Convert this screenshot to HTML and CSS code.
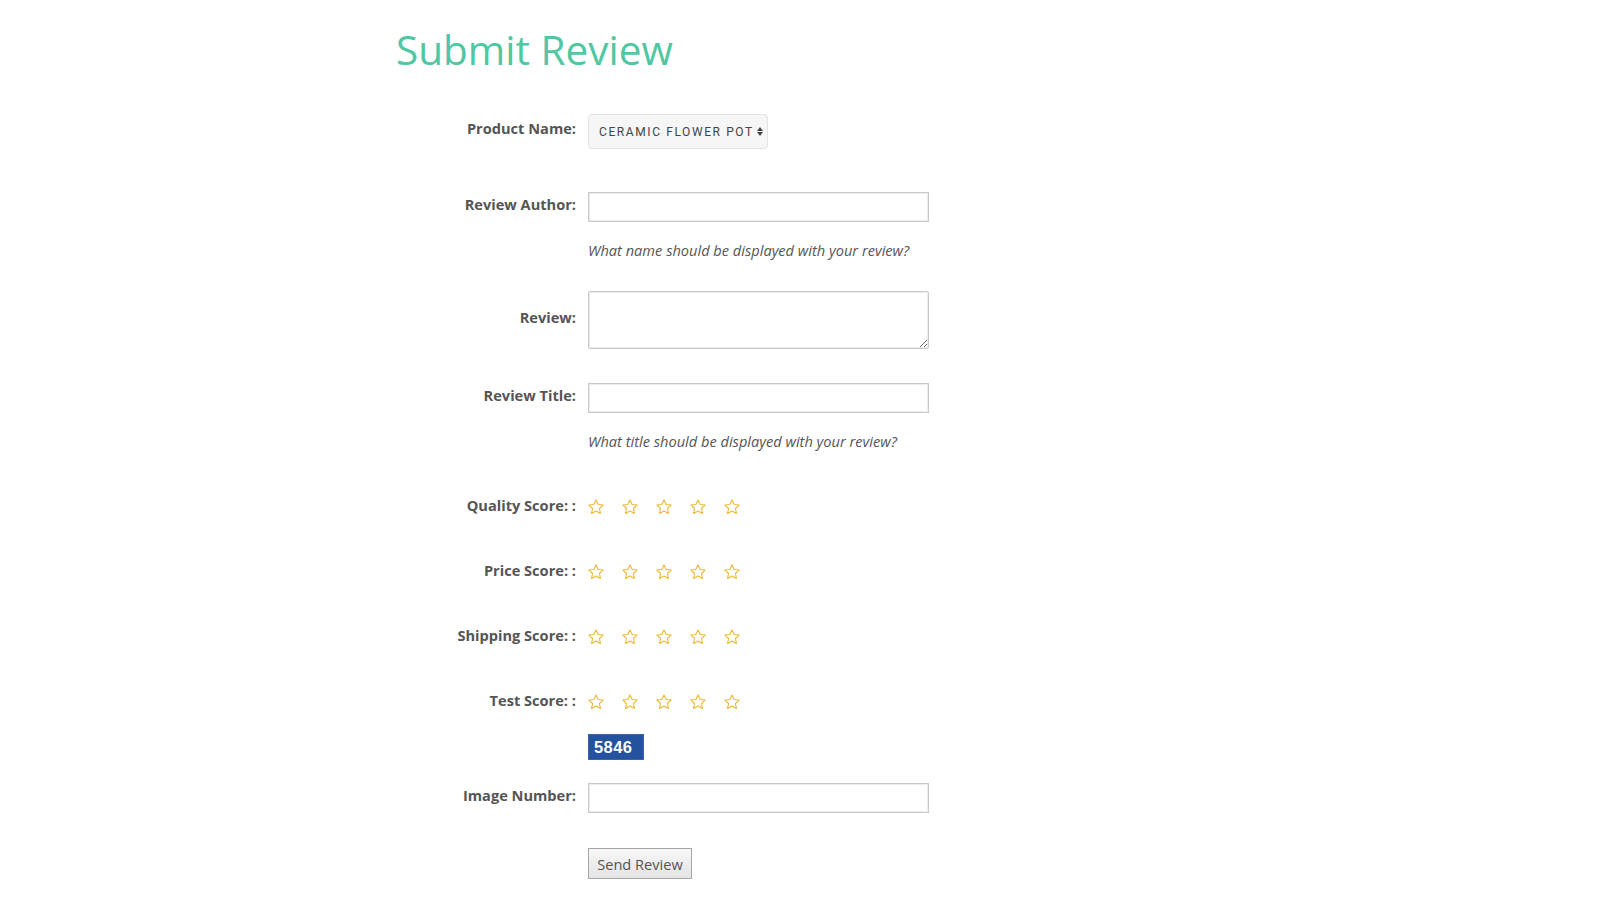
FILE: index.html
```html
<!DOCTYPE html>
<html lang="en">

<head>
    <meta charset="UTF-8">
    <meta name="viewport" content="width=device-width, initial-scale=1.0">
    <title>Submit Review</title>
    <link rel="stylesheet" href="styles.css">
</head>

<body>

    <div class="page">
        <h1 class="page-title">Submit Review</h1>

        <form class="review-form">
            <div class="row row-product">
                <label class="label" for="productName">Product Name:</label>
                <div class="select-wrap">
                    <select id="productName" class="select">
                        <option>Ceramic Flower Pot</option>
                    </select>
                    <span class="select-arrows"></span>
                </div>
            </div>

            <div class="row row-author">
                <label class="label" for="author">Review Author:</label>
                <input type="text" id="author" class="text-input">
            </div>
            <div class="row row-help">
                <span class="label"></span>
                <p class="help">What name should be displayed with your review?</p>
            </div>

            <div class="row row-review">
                <label class="label" for="review">Review:</label>
                <textarea id="review" class="text-area"></textarea>
            </div>

            <div class="row row-title">
                <label class="label" for="reviewTitle">Review Title:</label>
                <input type="text" id="reviewTitle" class="text-input">
            </div>
            <div class="row row-help">
                <span class="label"></span>
                <p class="help">What title should be displayed with your review?</p>
            </div>

            <div class="row row-score row-first-score">
                <span class="label">Quality Score: :</span>
                <div class="stars">
                    <svg class="star" viewBox="0 0 24 24"><path d="M12 2.5l2.9 6.1 6.6.8-4.9 4.6 1.3 6.6L12 17.3l-5.9 3.3 1.3-6.6-4.9-4.6 6.6-.8z"/></svg>
                    <svg class="star" viewBox="0 0 24 24"><path d="M12 2.5l2.9 6.1 6.6.8-4.9 4.6 1.3 6.6L12 17.3l-5.9 3.3 1.3-6.6-4.9-4.6 6.6-.8z"/></svg>
                    <svg class="star" viewBox="0 0 24 24"><path d="M12 2.5l2.9 6.1 6.6.8-4.9 4.6 1.3 6.6L12 17.3l-5.9 3.3 1.3-6.6-4.9-4.6 6.6-.8z"/></svg>
                    <svg class="star" viewBox="0 0 24 24"><path d="M12 2.5l2.9 6.1 6.6.8-4.9 4.6 1.3 6.6L12 17.3l-5.9 3.3 1.3-6.6-4.9-4.6 6.6-.8z"/></svg>
                    <svg class="star" viewBox="0 0 24 24"><path d="M12 2.5l2.9 6.1 6.6.8-4.9 4.6 1.3 6.6L12 17.3l-5.9 3.3 1.3-6.6-4.9-4.6 6.6-.8z"/></svg>
                </div>
            </div>

            <div class="row row-score">
                <span class="label">Price Score: :</span>
                <div class="stars">
                    <svg class="star" viewBox="0 0 24 24"><path d="M12 2.5l2.9 6.1 6.6.8-4.9 4.6 1.3 6.6L12 17.3l-5.9 3.3 1.3-6.6-4.9-4.6 6.6-.8z"/></svg>
                    <svg class="star" viewBox="0 0 24 24"><path d="M12 2.5l2.9 6.1 6.6.8-4.9 4.6 1.3 6.6L12 17.3l-5.9 3.3 1.3-6.6-4.9-4.6 6.6-.8z"/></svg>
                    <svg class="star" viewBox="0 0 24 24"><path d="M12 2.5l2.9 6.1 6.6.8-4.9 4.6 1.3 6.6L12 17.3l-5.9 3.3 1.3-6.6-4.9-4.6 6.6-.8z"/></svg>
                    <svg class="star" viewBox="0 0 24 24"><path d="M12 2.5l2.9 6.1 6.6.8-4.9 4.6 1.3 6.6L12 17.3l-5.9 3.3 1.3-6.6-4.9-4.6 6.6-.8z"/></svg>
                    <svg class="star" viewBox="0 0 24 24"><path d="M12 2.5l2.9 6.1 6.6.8-4.9 4.6 1.3 6.6L12 17.3l-5.9 3.3 1.3-6.6-4.9-4.6 6.6-.8z"/></svg>
                </div>
            </div>

            <div class="row row-score">
                <span class="label">Shipping Score: :</span>
                <div class="stars">
                    <svg class="star" viewBox="0 0 24 24"><path d="M12 2.5l2.9 6.1 6.6.8-4.9 4.6 1.3 6.6L12 17.3l-5.9 3.3 1.3-6.6-4.9-4.6 6.6-.8z"/></svg>
                    <svg class="star" viewBox="0 0 24 24"><path d="M12 2.5l2.9 6.1 6.6.8-4.9 4.6 1.3 6.6L12 17.3l-5.9 3.3 1.3-6.6-4.9-4.6 6.6-.8z"/></svg>
                    <svg class="star" viewBox="0 0 24 24"><path d="M12 2.5l2.9 6.1 6.6.8-4.9 4.6 1.3 6.6L12 17.3l-5.9 3.3 1.3-6.6-4.9-4.6 6.6-.8z"/></svg>
                    <svg class="star" viewBox="0 0 24 24"><path d="M12 2.5l2.9 6.1 6.6.8-4.9 4.6 1.3 6.6L12 17.3l-5.9 3.3 1.3-6.6-4.9-4.6 6.6-.8z"/></svg>
                    <svg class="star" viewBox="0 0 24 24"><path d="M12 2.5l2.9 6.1 6.6.8-4.9 4.6 1.3 6.6L12 17.3l-5.9 3.3 1.3-6.6-4.9-4.6 6.6-.8z"/></svg>
                </div>
            </div>

            <div class="row row-score">
                <span class="label">Test Score: :</span>
                <div class="stars">
                    <svg class="star" viewBox="0 0 24 24"><path d="M12 2.5l2.9 6.1 6.6.8-4.9 4.6 1.3 6.6L12 17.3l-5.9 3.3 1.3-6.6-4.9-4.6 6.6-.8z"/></svg>
                    <svg class="star" viewBox="0 0 24 24"><path d="M12 2.5l2.9 6.1 6.6.8-4.9 4.6 1.3 6.6L12 17.3l-5.9 3.3 1.3-6.6-4.9-4.6 6.6-.8z"/></svg>
                    <svg class="star" viewBox="0 0 24 24"><path d="M12 2.5l2.9 6.1 6.6.8-4.9 4.6 1.3 6.6L12 17.3l-5.9 3.3 1.3-6.6-4.9-4.6 6.6-.8z"/></svg>
                    <svg class="star" viewBox="0 0 24 24"><path d="M12 2.5l2.9 6.1 6.6.8-4.9 4.6 1.3 6.6L12 17.3l-5.9 3.3 1.3-6.6-4.9-4.6 6.6-.8z"/></svg>
                    <svg class="star" viewBox="0 0 24 24"><path d="M12 2.5l2.9 6.1 6.6.8-4.9 4.6 1.3 6.6L12 17.3l-5.9 3.3 1.3-6.6-4.9-4.6 6.6-.8z"/></svg>
                </div>
            </div>

            <div class="row row-captcha">
                <span class="label"></span>
                <div class="captcha">5846</div>
            </div>

            <div class="row row-image">
                <label class="label" for="imageNumber">Image Number:</label>
                <input type="text" id="imageNumber" class="text-input">
            </div>

            <div class="row row-submit">
                <span class="label"></span>
                <button type="button" class="send-button">Send Review</button>
            </div>
        </form>
    </div>

</body>

</html>
```

FILE: styles.css
```css
* {
    margin: 0;
    box-sizing: border-box;
}

body {
    font-family: 'Open Sans', 'Liberation Sans', sans-serif;
    margin: 0;
    padding: 0;
    background-color: #fff;
    color: #555;
}

.page {
    width: 806px;
    margin: 0 auto;
    padding-top: 25px;
}

.page-title {
    font-size: 40.5px;
    font-weight: 400;
    line-height: 50px;
    color: #4fc7a1;
    margin-left: -1px;
}

.row {
    display: flex;
    align-items: center;
}

.label {
    width: 191px;
    flex-shrink: 0;
    padding-right: 12px;
    padding-bottom: 7px;
    text-align: right;
    font-size: 14.6px;
    font-weight: 700;
    line-height: 20px;
    color: #555;
}

/* select */
.row-product {
    margin-top: 39px;
}

.select-wrap {
    position: relative;
    width: 180px;
    height: 35px;
}

.select {
    -webkit-appearance: none;
    appearance: none;
    width: 100%;
    height: 100%;
    padding: 0 0 0 10px;
    background-color: #f6f6f6;
    border: 1px solid #e3e3e3;
    border-radius: 4px;
    font-family: Roboto, 'Liberation Sans', sans-serif;
    font-size: 12px;
    letter-spacing: 1.6px;
    text-transform: uppercase;
    color: #444;
    outline: none;
}

.select-arrows {
    position: absolute;
    right: 5px;
    top: 13px;
    width: 6px;
    height: 9px;
    pointer-events: none;
}

.select-arrows::before,
.select-arrows::after {
    content: '';
    position: absolute;
    left: 0;
    border-left: 3px solid transparent;
    border-right: 3px solid transparent;
}

.select-arrows::before {
    top: 0;
    border-bottom: 4px solid #444;
}

.select-arrows::after {
    bottom: 0;
    border-top: 4px solid #444;
}

/* inputs */
.text-input,
.text-area {
    width: 341px;
    border: 1px solid #c9c9c9;
    box-shadow: inset 0 0 0 1px #ececec;
    background-color: #fff;
    font-family: 'Open Sans', sans-serif;
    font-size: 14px;
    color: #555;
    padding: 4px 8px;
    outline: none;
}

.text-input {
    height: 30px;
}

.text-area {
    height: 58px;
    border-radius: 2px;
}

.row-author {
    margin-top: 43px;
}

.row-help {
    margin-top: 18px;
}

.help {
    font-size: 14.6px;
    font-style: italic;
    line-height: 20px;
    color: #555;
}

.row-review {
    margin-top: 31px;
}

.row-title {
    margin-top: 34px;
}

/* stars */
.row-score {
    margin-top: 45px;
    height: 20px;
}

.row-score .label {
    padding-bottom: 5px;
}

.row-first-score {
    margin-top: 46px;
}

.stars {
    display: flex;
    gap: 16px;
    margin-left: -1px;
}

.star {
    width: 18px;
    height: 18px;
    fill: none;
    stroke: #ebb834;
    stroke-width: 1.4;
    stroke-linejoin: round;
}

/* captcha */
.row-captcha {
    margin-top: 22px;
}

.captcha {
    width: 56px;
    height: 26px;
    background-color: #24529f;
    border: 1px solid #3a64ab;
    color: #fff;
    font-family: 'Liberation Sans', Arial, sans-serif;
    font-size: 16.5px;
    font-weight: 700;
    line-height: 25px;
    padding-left: 5px;
    letter-spacing: 0.4px;
}

.row-image {
    margin-top: 23px;
}

/* button */
.row-submit {
    margin-top: 35px;
}

.send-button {
    height: 31px;
    width: 104px;
    padding: 0;
    background: linear-gradient(#f7f7f7, #e4e4e4);
    border: 1px solid #a6a6a6;
    border-radius: 0;
    font-family: 'Open Sans', sans-serif;
    font-size: 14.6px;
    color: #555;
    cursor: pointer;
}
```
